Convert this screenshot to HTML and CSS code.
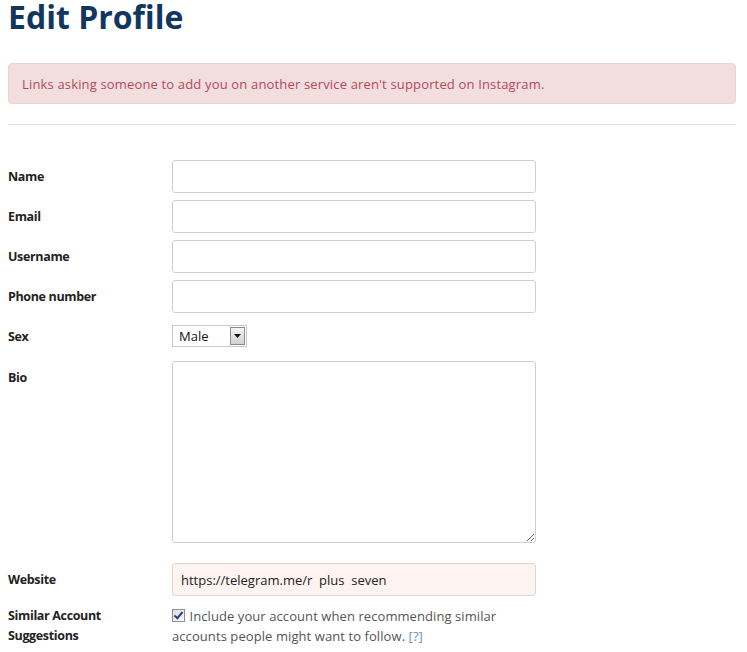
FILE: index.html
```html
<!DOCTYPE html>
<html lang="en">
<head>
<meta charset="utf-8">
<title>Edit Profile</title>
<link rel="stylesheet" href="styles.css">
</head>
<body>
<div class="page">
  <h1 class="title">Edit Profile</h1>
  <div class="alert">Links asking someone to add you on another service aren't supported on Instagram.</div>
  <hr class="divider">
  <form class="form">
    <div class="row">
      <label class="label" for="name">Name</label>
      <input class="field" id="name" type="text">
    </div>
    <div class="row">
      <label class="label" for="email">Email</label>
      <input class="field" id="email" type="text">
    </div>
    <div class="row">
      <label class="label" for="username">Username</label>
      <input class="field" id="username" type="text">
    </div>
    <div class="row">
      <label class="label" for="phone">Phone number</label>
      <input class="field" id="phone" type="text">
    </div>
    <div class="row row-sex">
      <label class="label" for="sex">Sex</label>
      <div class="select-wrap">
        <select class="select" id="sex"><option>Male</option><option>Female</option></select>
        <span class="select-btn"><svg width="7" height="4" viewBox="0 0 7 4"><path d="M0 0h7L3.5 4z" fill="#111"/></svg></span>
      </div>
    </div>
    <div class="row row-bio">
      <label class="label" for="bio">Bio</label>
      <textarea class="bio" id="bio"></textarea>
    </div>
    <div class="row">
      <label class="label" for="website">Website</label>
      <input class="field field-error" id="website" type="text" value="https://telegram.me/r  plus  seven">
    </div>
    <div class="row row-similar">
      <label class="label label-multi" for="similar">Similar Account<br>Suggestions</label>
      <div class="similar">
        <input class="check" id="similar" type="checkbox" checked>
        Include your account when recommending similar accounts people might want to follow.&nbsp;<a class="help" href="#">[?]</a>
      </div>
    </div>
  </form>
</div>
</body>
</html>
```
FILE: styles.css
```css
html, body {
  margin: 0;
  padding: 0;
  background: #fff;
}
body {
  font-family: "Open Sans", "Liberation Sans", sans-serif;
  color: #222;
}
.page {
  padding: 0 11px 0 8px;
}
.title {
  margin: 0;
  font-size: 32px;
  line-height: 33px;
  font-weight: 700;
  color: #12375f;
  letter-spacing: 0;
}
.alert {
  margin-top: 30px;
  height: 41px;
  box-sizing: border-box;
  padding: 0 13px;
  display: flex;
  align-items: center;
  background: #f2dede;
  border: 1px solid #ecd3d6;
  border-radius: 4px;
  color: #b54a5a;
  font-size: 13px;
  letter-spacing: 0.16px;
}
.divider {
  margin: 20px 0 0;
  border: 0;
  border-top: 1px solid #e3e3e3;
  height: 0;
}
.form {
  margin-top: 35px;
}
.row {
  display: grid;
  grid-template-columns: 164px 364px;
  margin-bottom: 7px;
  align-items: center;
}
.label {
  font-size: 12.5px;
  font-weight: 700;
  color: #222;
  line-height: 33px;
  letter-spacing: -0.35px;
}
.field {
  box-sizing: border-box;
  width: 364px;
  height: 33px;
  margin: 0;
  border: 1px solid #cfcfcf;
  border-radius: 3px;
  background: #fff;
  padding: 0 8px;
  font-family: "Open Sans", "Liberation Sans", sans-serif;
  font-size: 13px;
  color: #222;
  outline: none;
}
.field-error {
  background: #fdf3f1;
  border-color: #e6d2cf;
}
.row-sex {
  margin-bottom: 8px;
}
.select-wrap {
  display: inline-flex;
  width: 75px;
  height: 22px;
  box-sizing: border-box;
  border: 1px solid #c9c9c9;
  background: #fff;
  align-items: stretch;
  position: relative;
  top: -1px;
}
.select {
  appearance: none;
  -webkit-appearance: none;
  border: 0;
  background: transparent;
  flex: 1;
  min-width: 0;
  padding: 0 0 0 6px;
  margin: 0;
  font-family: "Open Sans", "Liberation Sans", sans-serif;
  font-size: 13px;
  color: #111;
  outline: none;
}
.select-btn {
  width: 15px;
  margin: 1px;
  box-sizing: border-box;
  border: 1px solid #8c8c8c;
  background: linear-gradient(#f4f4f4, #d2d2d2);
  display: flex;
  align-items: center;
  justify-content: center;
}
.row-bio {
  align-items: start;
  margin-bottom: 20px;
}
.bio {
  box-sizing: border-box;
  width: 364px;
  height: 182px;
  margin: 0;
  border: 1px solid #cfcfcf;
  border-radius: 3px;
  font-family: "Open Sans", "Liberation Sans", sans-serif;
  font-size: 13px;
  display: block;
  outline: none;
}
.row-similar {
  align-items: start;
  margin-top: 10px;
}
.label-multi {
  line-height: 20px;
}
.similar {
  font-size: 13px;
  line-height: 20px;
  color: #555;
  letter-spacing: 0.08px;
}
.check {
  appearance: none;
  -webkit-appearance: none;
  width: 13px;
  height: 13px;
  margin: 0 1px 0 0;
  box-sizing: border-box;
  border: 1px solid #8e8f8f;
  background: linear-gradient(135deg, #dcdcdc, #fbfbfb);
  vertical-align: -1px;
  position: relative;
}
.check:checked::after {
  content: "";
  position: absolute;
  left: 3px;
  top: 0px;
  width: 3px;
  height: 7px;
  border-right: 2px solid #2a3f86;
  border-bottom: 2px solid #2a3f86;
  transform: rotate(40deg);
}
.help {
  color: #6d94ba;
  text-decoration: none;
}
```
